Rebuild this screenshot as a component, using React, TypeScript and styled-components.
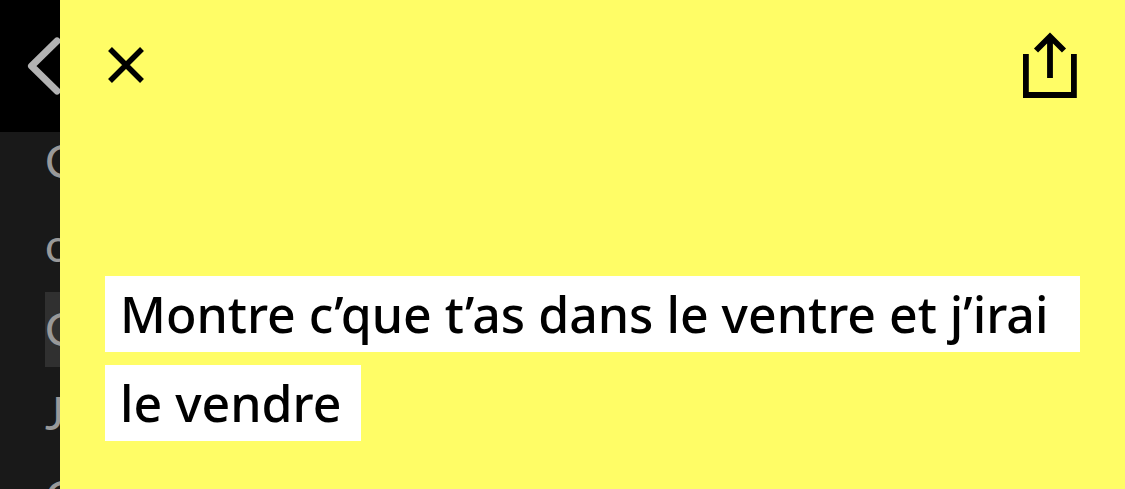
import React from "react";
import styled, { createGlobalStyle } from "styled-components";

const GlobalStyle = createGlobalStyle`
  *, *::before, *::after { box-sizing: border-box; }
  body { margin: 0; background: #191919; }
`;

const Shell = styled.div`
  display: flex;
  height: 100vh;
  overflow: hidden;
`;

const Rail = styled.aside`
  flex: 0 0 60px;
  min-width: 0;
  overflow: hidden;
  background: #191919;
`;

const RailHeader = styled.div`
  position: relative;
  z-index: 1;
  display: flex;
  align-items: center;
  height: 132px;
  padding-left: 24px;
  background: #000;
`;

const IconButton = styled.button`
  display: flex;
  flex-shrink: 0;
  padding: 0;
  border: 0;
  background: none;
  color: inherit;
  cursor: pointer;
`;

const BackButton = styled(IconButton)`
  color: #b3b3b3;
`;

const Lyrics = styled.div`
  display: flex;
  flex-direction: column;
  gap: 9px;
  margin-top: -8px;
  padding-left: 45px;
`;

const LyricLine = styled.p<{ $active?: boolean }>`
  flex-shrink: 0;
  margin: 0;
  height: 75px;
  background: ${({ $active }) => ($active ? "#303030" : "transparent")};
  color: #999;
  font: 400 46px/73px Lato, sans-serif;
  white-space: nowrap;
`;

const Panel = styled.main`
  flex: 1;
  min-width: 0;
  background: #fffd66;
  color: #000;
`;

const Toolbar = styled.header`
  display: flex;
  align-items: center;
  justify-content: space-between;
  height: 132px;
  padding: 0 45px;
`;

const Title = styled.h1`
  display: flex;
  flex-direction: column;
  align-items: flex-start;
  gap: 13px;
  margin: 0;
  padding: 144px 45px 48px;
  font: 500 50px/76px "Noto Sans", sans-serif;
`;

const TitleLine = styled.span<{ $full?: boolean }>`
  width: ${({ $full }) => ($full ? "100%" : "auto")};
  padding: 0 20px 0 15px;
  background: #fff;
  white-space: nowrap;
`;

const lyrics = [
  { text: "C" },
  { text: "c" },
  { text: "C", active: true },
  { text: "J" },
  { text: "C" },
];

export default function App() {
  return (
    <>
      <GlobalStyle />
      <Shell>
        <Rail>
          <RailHeader>
            <BackButton type="button" aria-label="Retour">
              <svg width="40" height="64" viewBox="0 0 40 64" fill="none" stroke="currentColor" strokeWidth="7" strokeLinecap="round" strokeLinejoin="round">
                <path d="M33 7 7.500 32 33 57" />
              </svg>
            </BackButton>
          </RailHeader>
          <Lyrics>
            {lyrics.map((line, index) => (
              <LyricLine key={index} $active={line.active}>
                {line.text}
              </LyricLine>
            ))}
          </Lyrics>
        </Rail>
        <Panel>
          <Toolbar>
            <IconButton type="button" aria-label="Fermer">
              <svg width="42" height="42" viewBox="0 0 42 42" fill="none" stroke="currentColor" strokeWidth="5.500">
                <path d="M5 4 37 36M37 4 5 36" />
              </svg>
            </IconButton>
            <IconButton type="button" aria-label="Partager">
              <svg width="60" height="68" viewBox="0 0 60 68" fill="none" stroke="currentColor" strokeWidth="5.800">
                <path d="M5.900 22V63H53.900V22M30 46V6M16 18.500 30 4.500 44 18.500" />
              </svg>
            </IconButton>
          </Toolbar>
          <Title>
            <TitleLine $full>Montre c’que t’as dans le ventre et j’irai</TitleLine>
            <TitleLine>le vendre</TitleLine>
          </Title>
        </Panel>
      </Shell>
    </>
  );
}
